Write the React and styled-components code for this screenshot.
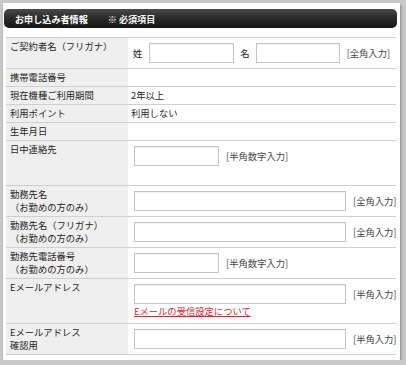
import React from "react";
import styled, { createGlobalStyle } from "styled-components";

const Global = createGlobalStyle`
  html, body { margin: 0; padding: 0; }
  body {
    background: #c9c9c9;
    font-family: "Noto Sans CJK JP", "Noto Sans", sans-serif;
    font-size: 9.3px;
    color: #262626;
  }
`;

const Panel = styled.div`
  margin: 3px 0 0 3px;
  width: 397px;
  height: 357px;
  background: #fff;
  box-shadow: 1px 2px 3px rgba(0, 0, 0, 0.35);
  padding: 6px 3px 0 1px;
  box-sizing: border-box;
`;

const Header = styled.div`
  height: 19px;
  border-radius: 5px;
  background: linear-gradient(#4a4a4a, #2c2c2c 45%, #151515);
  display: flex;
  align-items: center;
  gap: 20px;
  padding-left: 11px;
  color: #fff;
  font-weight: bold;
  font-size: 9.1px;
`;

const Req = styled.span`
  color: #f2f2f2;
`;

const Table = styled.div`
  margin: 9px 1px 0 2px;
  border-bottom: 1px solid #cfcfcf;
`;

const Row = styled.div`
  display: grid;
  grid-template-columns: 122px 1fr;
  border-top: 1px solid #cfcfcf;
`;

const Label = styled.div`
  background: #efefef;
  padding: 2px 4px;
  line-height: 13px;
  white-space: pre-line;
`;

const Value = styled.div`
  padding: ${(p) => (p.$plain ? "2px 3px" : "5px 0 5px 6px")};
  line-height: 13px;
  display: flex;
  flex-direction: column;
  align-items: flex-start;
  justify-content: ${(p) => (p.$plain ? "center" : "flex-start")};
  min-width: 0;
`;

const Line = styled.div`
  display: flex;
  align-items: center;
  gap: 7px;
  height: 20px;
  white-space: nowrap;
`;

const NameLine = styled(Line)`
  margin-left: -1px;
  gap: 6.5px;
`;

const Input = styled.div`
  flex: none;
  width: ${(p) => p.$w}px;
  height: 20px;
  box-sizing: border-box;
  border: 1px solid #c4c4c4;
  box-shadow: inset 0 1px 1px rgba(0, 0, 0, 0.06);
  background: #fff;
`;

const Hint = styled.span`
  flex: none;
  color: #444;
`;

const Spacer = styled.div`
  height: 14px;
`;

const Link = styled.a`
  color: #e0262b;
  text-decoration: underline;
  margin-top: 1px;
  line-height: 13px;
  white-space: nowrap;
`;

export default function App() {
  return (
    <>
      <Global />
      <Panel>
        <Header>
          <span>お申し込み者情報</span>
          <Req>※ 必須項目</Req>
        </Header>
        <Table>
          <Row>
            <Label>ご契約者名（フリガナ）</Label>
            <Value>
              <NameLine>
                <span>姓</span>
                <Input $w={85} />
                <span>名</span>
                <Input $w={84} />
                <Hint>[全角入力]</Hint>
              </NameLine>
            </Value>
          </Row>
          <Row>
            <Label>携帯電話番号</Label>
            <Value $plain></Value>
          </Row>
          <Row>
            <Label>現在機種ご利用期間</Label>
            <Value $plain>2年以上</Value>
          </Row>
          <Row>
            <Label>利用ポイント</Label>
            <Value $plain>利用しない</Value>
          </Row>
          <Row>
            <Label>生年月日</Label>
            <Value $plain></Value>
          </Row>
          <Row>
            <Label>日中連絡先</Label>
            <Value>
              <Line>
                <Input $w={85} />
                <Hint>[半角数字入力]</Hint>
              </Line>
              <Spacer />
            </Value>
          </Row>
          <Row>
            <Label>{"勤務先名\n（お勤めの方のみ）"}</Label>
            <Value>
              <Line>
                <Input $w={212} />
                <Hint>[全角入力]</Hint>
              </Line>
            </Value>
          </Row>
          <Row>
            <Label>{"勤務先名（フリガナ）\n（お勤めの方のみ）"}</Label>
            <Value>
              <Line>
                <Input $w={212} />
                <Hint>[全角入力]</Hint>
              </Line>
            </Value>
          </Row>
          <Row>
            <Label>{"勤務先電話番号\n（お勤めの方のみ）"}</Label>
            <Value>
              <Line>
                <Input $w={85} />
                <Hint>[半角数字入力]</Hint>
              </Line>
            </Value>
          </Row>
          <Row>
            <Label>Eメールアドレス</Label>
            <Value>
              <Line>
                <Input $w={212} />
                <Hint>[半角入力]</Hint>
              </Line>
              <Link>Eメールの受信設定について</Link>
            </Value>
          </Row>
          <Row>
            <Label>{"Eメールアドレス\n確認用"}</Label>
            <Value>
              <Line>
                <Input $w={212} />
                <Hint>[半角入力]</Hint>
              </Line>
            </Value>
          </Row>
        </Table>
      </Panel>
    </>
  );
}
